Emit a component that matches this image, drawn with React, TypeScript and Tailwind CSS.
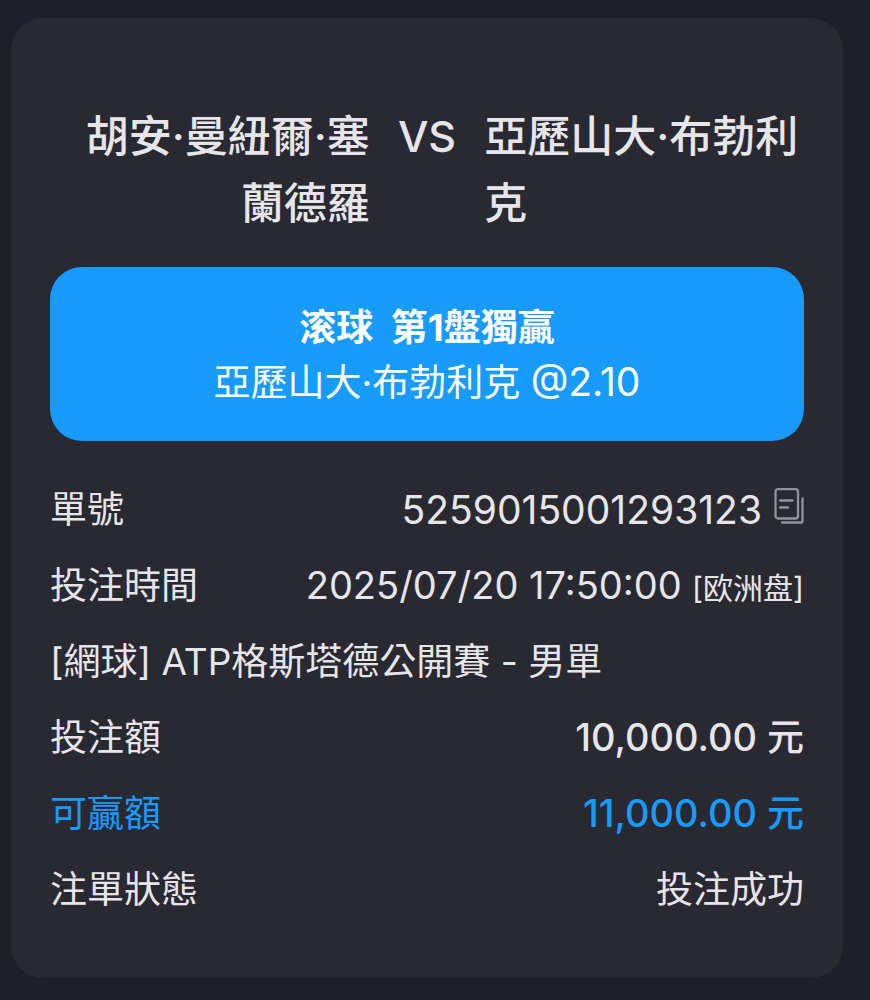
function CopyIcon() {
  return (
    <svg className="block h-9 w-[30px]" viewBox="0 0 30 36" fill="none" stroke="#92929c" strokeWidth="2.3" strokeLinejoin="round" strokeLinecap="round">
      <rect x="1.5" y="1.2" width="22.5" height="29.3" rx="2.5" />
      <path d="M6 12.5h12.5M6 19.5h8" />
      <path d="M28.5 10.5V33a1.5 1.5 0 0 1-1.5 1.5H8" />
    </svg>
  );
}

export default function App() {
  return (
    <main className="min-h-screen bg-[#1d2029] pt-[18px] pr-[27px] pb-[22px] pl-[11px] font-[Inter,'Noto_Sans_CJK_TC',sans-serif] text-[#e6e6ea]">
      <article className="rounded-[32px] bg-[#292932] px-[39px] pt-[85px] pb-[50px]">
        {/* Players */}
        <header className="flex gap-7 text-[43px] leading-[67px] font-medium">
          <h2 className="flex-1 text-right">胡安·曼紐爾·塞蘭德羅</h2>
          <span>VS</span>
          <h2 className="flex-1">亞歷山大·布勃利克</h2>
        </header>

        {/* Selection */}
        <section className="mt-[30px] rounded-[32px] bg-[#179bff] pt-[33px] pb-[31px] text-center text-[37px] leading-[55px] text-white">
          <h3 className="font-bold">滚球&nbsp; 第1盤獨贏</h3>
          <p>亞歷山大·布勃利克 <span className="text-[39px] leading-none">@2.10</span></p>
        </section>

        {/* Bet details */}
        <dl className="mt-[31px] text-[37px] leading-[76px]">
          <div className="flex justify-between">
            <dt>單號</dt>
            <dd className="flex items-center gap-3">
              <span className="text-[39px]">5259015001293123</span>
              <button type="button" aria-label="複製單號" className="pb-2">
                <CopyIcon />
              </button>
            </dd>
          </div>
          <div className="flex justify-between">
            <dt>投注時間</dt>
            <dd>
              <span className="text-[38px] leading-none">2025/07/20 17:50:00</span> <span className="text-[30px] leading-none">[欧洲盘]</span>
            </dd>
          </div>
          <div>
            <dt>[網球] ATP格斯塔德公開賽 - 男單</dt>
          </div>
          <div className="flex justify-between">
            <dt>投注額</dt>
            <dd className="font-medium"><span className="text-[38px] leading-none">10,000.00</span> 元</dd>
          </div>
          <div className="flex justify-between text-[#179bff]">
            <dt>可贏額</dt>
            <dd className="font-medium"><span className="text-[38px] leading-none">11,000.00</span> 元</dd>
          </div>
          <div className="flex justify-between">
            <dt>注單狀態</dt>
            <dd>投注成功</dd>
          </div>
        </dl>
      </article>
    </main>
  );
}
